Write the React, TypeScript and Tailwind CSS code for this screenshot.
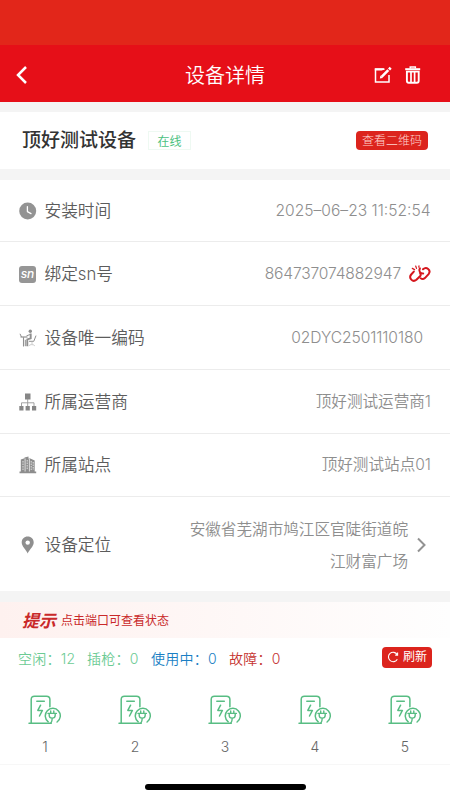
import React from "react";

const font = "font-['Inter','Noto_Sans_CJK_SC',sans-serif]";

function ClockIcon() {
  return (
    <svg className="block size-[18px]" viewBox="0 0 18 18">
      <circle cx="8.700" cy="9" r="8.500" fill="#939393" />
      <path d="M8.400 4.600v5l3.600 2" fill="none" stroke="#fff" strokeWidth="1.300" strokeLinecap="round" strokeLinejoin="round" />
    </svg>
  );
}

function SnIcon() {
  return (
    <span className="mr-px flex size-[17px] items-center justify-center rounded-[3px] bg-[#969696] pb-px text-[12px] leading-none font-medium tracking-[-0.200px] text-white italic">
      sn
    </span>
  );
}

function DeskIcon() {
  return (
    <svg className="block size-[18px]" viewBox="0 0 18 18" fill="none" stroke="#8f8f8f">
      <path d="M1 4.800 2.500 8" strokeWidth="1" />
      <path d="M1.500 8h7" strokeWidth="1.200" />
      <path d="M4.500 8.200v9.300" strokeWidth="1.100" />
      <circle cx="11.300" cy="2.200" r="1.700" fill="#8f8f8f" stroke="none" />
      <path d="M11.700 4.400v5L8.300 10.400v6.800" strokeWidth="1.900" />
      <path d="M11 5.600 7.500 6.800M6.300 10.800v6.400" strokeWidth="1" />
      <path d="M17 6.600 14.800 12.300H10" strokeWidth="1" />
      <path d="M13 12.300v2.800M9.800 16.800c1-1.600 5-1.600 6 0" strokeWidth="0.700" stroke="#b5b5b5" />
    </svg>
  );
}

function OrgIcon() {
  return (
    <svg className="block size-[18px]" viewBox="0 0 18 18" fill="#868686">
      <path d="M6 .5h5.500v6H6zM.3 13h4.200v4.500H.3zM6.600 13h4.200v4.500H6.600zM13 13h4.200v4.500H13z" />
      <path d="M8.700 6v7M2.500 13v-3.200h12.500V13" fill="none" stroke="#999" strokeWidth="0.900" />
    </svg>
  );
}

function BuildingIcon() {
  return (
    <svg className="block size-[18px]" viewBox="0 0 18 18">
      <path d="M.5 15.500h1.300V3.400l3.700-1.200V1.600L9.500.5v2.200l1.200-.5 5 2.200v11.100h1.500v1.700H.5z" fill="#8d8d8d" />
      <path d="M6.100 2.500v13M10.400 2.500v13" stroke="#fff" strokeWidth="0.700" />
      <path d="M4 5v9M8.200 4v10M12.200 5v9M14.200 6v8" stroke="#ececec" strokeWidth="0.900" strokeDasharray="1.600 0.900" />
    </svg>
  );
}

function PinIcon() {
  return (
    <svg className="block size-[18px]" viewBox="0 0 18 18">
      <path d="M8.700.6C5.200.6 2.700 3.200 2.700 6.500c0 3.800 4.300 7.300 6 10.900 1.700-3.600 6-7.100 6-10.900C14.700 3.200 12.200.6 8.700.6z" fill="#8f8f8f" />
      <circle cx="8.700" cy="6.600" r="2.200" fill="#fff" />
    </svg>
  );
}

function UnbindIcon() {
  return (
    <svg className="block h-[18px] w-[22px]" viewBox="0 0 22 18" fill="none" stroke="#d5161d" strokeWidth="2" strokeLinecap="round" strokeLinejoin="round">
      <path d="M4.800 6.600 2.200 9.500c-2.900 3.600 1.500 8.300 5.200 5.300L11 11.300c.9-1 .8-2.200.2-3" />
      <path d="M14 4.300c3.600-3.200 8.200.8 5.800 4.500l-3.900 4.300c-1.400 1.200-2.900 1.200-4.200.2" />
      <path d="M10.900 3.400c-1.500 2.400.2 5.400 3.300 5.200" />
      <path d="M3.300 3.400l2.300 1.200M6.700 1l.8 2.400M10 .8l-.2 1.400" strokeWidth="1.200" />
    </svg>
  );
}

function EditIcon() {
  return (
    <svg className="block size-[18px]" viewBox="0 0 18 18" fill="none" stroke="#fff">
      <path d="M10.500 3.200H1.500v12.800h13.500V9" strokeWidth="1.500" />
      <path d="M.8 2.200h9.500L8.200 4.500H.8z" fill="#fff" stroke="none" />
      <path d="M7.600 10.800 14.300 4.100" strokeWidth="2.600" />
      <path d="M15 3.400l1.700-1.700" strokeWidth="2.800" />
      <path d="M5.800 12.600l.7-3 2.300 2.300z" fill="#fff" stroke="none" />
    </svg>
  );
}

function TrashIcon() {
  return (
    <svg className="block size-[18px]" viewBox="0 0 18 18" fill="none" stroke="#fff">
      <path d="M1.200 3.200h15" strokeWidth="2" />
      <path d="M6.200 2.600V1h5.200v1.600" strokeWidth="1.400" />
      <path d="M2.900 5.600v9.200c0 1.200.7 1.900 1.800 1.900h8.200c1.100 0 1.800-.7 1.800-1.900V5.600z" strokeWidth="1.900" />
      <path d="M7 5.500v10.500M10.600 5.500v10.500" strokeWidth="1.700" />
    </svg>
  );
}

function ChargerIcon() {
  return (
    <svg className="mr-px block h-[30px] w-[33px]" viewBox="0 0 33 30" fill="none" stroke="#58bd83" strokeWidth="1.500" strokeLinecap="round" strokeLinejoin="round">
      <path d="M1 28.300h22.200" />
      <path d="M3.200 28V4.600c0-2.200 1.100-3.400 3.300-3.400h12c2.200 0 3.400 1.200 3.400 3.400v7.200" />
      <path d="M8.800 6.300h7.500" />
      <path d="M12.600 10.200 9.800 15.400h4.600l-2.900 5.600" />
      <path d="M20.200 26.800a7.500 7.500 0 1 1 8.900.2" />
      <path
        d="M20 18.400h8.400M21.200 18.600v1.600c0 1.900 1.100 2.900 3 2.900s3-1 3-2.900v-1.600M22.700 16v2.300M25.800 16v2.300M24.200 23.300c0 2-.4 3.500-1.300 4.700"
        strokeWidth="1.400"
      />
    </svg>
  );
}

function Row({
  icon,
  label,
  height = "h-16",
  children,
}: {
  icon: React.ReactNode;
  label: string;
  height?: string;
  children: React.ReactNode;
}) {
  return (
    <div className={`flex items-center justify-between border-b border-[#ececec] pr-[19px] pl-[19px] ${height}`}>
      <div className="flex items-center">
        <span className="flex w-[18px] justify-center">{icon}</span>
        <span className="ml-[7.500px] text-[16.700px] leading-6 font-[350] text-[#5c5c5c]">{label}</span>
      </div>
      {children}
    </div>
  );
}

const valueText = "text-[15.600px] leading-6 font-[350] text-[#8e8e8e]";

const stats = [
  { text: "空闲：12", style: "w-[69px] text-[#6ccb94]" },
  { text: "插枪：0", style: "w-[64px] text-[#6ccb94]" },
  { text: "使用中：0", style: "w-[78px] text-[#1b7fc4]" },
  { text: "故障：0", style: "text-[#c5332f]" },
];

export default function App() {
  return (
    <div className={`flex h-[800px] w-[450px] flex-col overflow-hidden bg-[#f4f4f4] ${font}`}>
      <div className="h-[45px] shrink-0 bg-[#e2261a]" />
      <header className="grid h-[57px] shrink-0 grid-cols-3 items-center bg-[#e60f18] pt-[3px]">
        <svg className="ml-[15px] block h-[18px] w-[14px]" viewBox="0 0 14 18" fill="none" stroke="#fff" strokeWidth="2.500">
          <path d="M11 1 3 9l8 8" />
        </svg>
        <h1 className="pt-[2px] text-center text-[20px] leading-7 font-[350] text-white">设备详情</h1>
        <div className="flex justify-end gap-[12.500px] pr-[28px] pb-px">
          <EditIcon />
          <TrashIcon />
        </div>
      </header>

      <section className="mt-[10px] flex h-[57px] shrink-0 items-center bg-white pr-[22px] pl-[22px]">
        <h2 className="pt-px text-[19px] leading-7 font-medium text-[#333]">顶好测试设备</h2>
        <span className="ml-[12px] flex h-[19px] w-[43px] items-center justify-center border border-[#eef9f2] pt-[2px] text-[12px] leading-none text-[#4cc27f]">
          在线
        </span>
        <button className="ml-auto flex h-[19px] w-[72px] items-center justify-center rounded-[4px] bg-[#dc241d] text-[12px] leading-none font-light text-[#ffd5cf]">
          查看二维码
        </button>
      </section>

      <section className="mt-[11px] shrink-0 bg-white">
        <Row icon={<ClockIcon />} label="安装时间" height="h-[62px]">
          <span className={`mr-[0.500px] ${valueText}`}>2025–06–23 11:52:54</span>
        </Row>
        <Row icon={<SnIcon />} label="绑定sn号" height="h-16 pt-px">
          <span className="flex items-center gap-[8px]">
            <span className={`tracking-[-0.150px] ${valueText}`}>864737074882947</span>
            <UnbindIcon />
          </span>
        </Row>
        <Row icon={<DeskIcon />} label="设备唯一编码">
          <span className={`mr-[8px] tracking-[-0.080px] ${valueText}`}>02DYC2501110180</span>
        </Row>
        <Row icon={<OrgIcon />} label="所属运营商">
          <span className={valueText}>顶好测试运营商1</span>
        </Row>
        <Row icon={<BuildingIcon />} label="所属站点" height="h-[63px]">
          <span className={valueText}>顶好测试站点01</span>
        </Row>
        <div className="h-[94px] overflow-hidden">
          <Row icon={<PinIcon />} label="设备定位" height="h-[96px]">
            <span className="flex items-center">
              <span className="w-[222px] pt-[2px] text-right text-[15.600px] leading-8 font-[350] text-[#8e8e8e]">
                安徽省芜湖市鸠江区官陡街道皖江财富广场
              </span>
              <svg className="mr-[4px] ml-[8px] block h-[16px] w-[11px]" viewBox="0 0 11 16" fill="none" stroke="#929292" strokeWidth="2">
                <path d="M2 1.500 8.500 8 2 14.500" />
              </svg>
            </span>
          </Row>
        </div>
      </section>

      <section className="mt-[11px] flex h-[36px] shrink-0 items-center bg-linear-to-r from-[#fef1ef] to-[#fefefe] pt-[2px] pl-[22px] text-[#c9292a]">
        <strong className="text-[17px] leading-6 font-bold italic">提示</strong>
        <span className="ml-[5px] text-[12px] leading-6">点击端口可查看状态</span>
      </section>

      <section className="h-[126px] shrink-0 bg-white">
        <div className="flex h-[40px] items-center pt-px pr-[18px] pl-[18px]">
          {stats.map((s) => (
            <span key={s.text} className={`text-[14px] leading-6 font-[350] tracking-[0.250px] whitespace-nowrap ${s.style}`}>
              {s.text}
            </span>
          ))}
          <button className="mb-[3px] ml-auto flex h-[21px] w-[50px] items-center justify-center gap-[4px] rounded-[4px] bg-[#dc241d] text-[12px] leading-none text-white">
            <svg className="block size-[12px]" viewBox="0 0 12 12" fill="none" stroke="#fff" strokeWidth="1.100">
              <path d="M10.300 8.200A4.700 4.700 0 1 1 10.200 3.600M10.600 1.600v2.500H8.200" />
            </svg>
            刷新
          </button>
        </div>
        <div className="grid grid-cols-5 pt-[17px]">
          {[1, 2, 3, 4, 5].map((n) => (
            <div key={n} className="flex flex-col items-center">
              <ChargerIcon />
              <span className="mt-[12px] text-[14px] leading-5 font-[350] text-[#666]">{n}</span>
            </div>
          ))}
        </div>
      </section>

      <footer className="flex grow justify-center border-t border-[#f7f7f7] bg-white pt-[19px]">
        <div className="h-[6px] w-[161px] rounded-full bg-black" />
      </footer>
    </div>
  );
}
